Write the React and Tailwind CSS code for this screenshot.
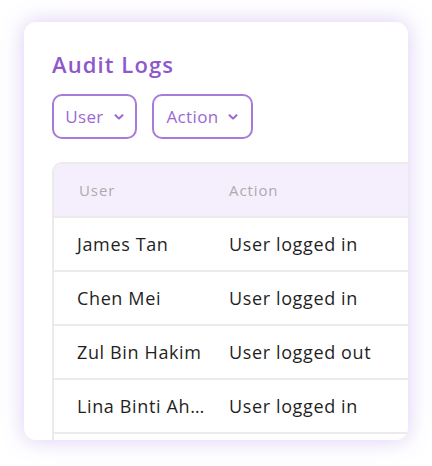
import React from 'react';

const rows = [
  { user: 'James Tan', action: 'User logged in' },
  { user: 'Chen Mei', action: 'User logged in' },
  { user: 'Zul Bin Hakim', action: 'User logged out' },
  { user: 'Lina Binti Ahmad', action: 'User logged in' },
];

const Chevron = () => (
  <svg viewBox="0 0 10 6" className="w-[10px] h-[6px]" fill="none" stroke="currentColor" strokeWidth="2" strokeLinecap="round" strokeLinejoin="round">
    <path d="M1.5 1.2L5 4.6l3.5-3.4" />
  </svg>
);

const FilterButton = ({ label, width }) => (
  <button className={`${width} h-[45px] flex items-center justify-center gap-[10px] border-2 border-[#a77cd8] rounded-[10px] text-[#9a68d4] text-[17px] tracking-[0.02em]`}>
    {label}
    <Chevron />
  </button>
);

export default function App() {
  return (
    <div className="w-[432px] h-[466px] bg-white pt-[22px] pl-[24px]" style={{ fontFamily: '"Open Sans", sans-serif' }}>
      <div className="w-[384px] h-[418px] bg-white rounded-[12px] overflow-hidden shadow-[0_0_22px_rgba(150,110,225,0.35)] pl-[28px] pt-[28px]">
        <h1 className="text-[22px] leading-[28px] font-semibold text-[#8f58cc] tracking-[0.05em]">Audit Logs</h1>
        <div className="flex gap-[15px] mt-[16px]">
          <FilterButton label="User" width="w-[85px]" />
          <FilterButton label="Action" width="w-[101px]" />
        </div>
        <div className="mt-[23px] w-[420px] border-2 border-[#ebebeb] rounded-tl-[10px] overflow-hidden">
          <div className="flex h-[52px] items-center bg-[#f5effd] text-[#ababab] text-[15px] tracking-[0.06em]">
            <div className="w-[175px] pl-[25px]">User</div>
            <div>Action</div>
          </div>
          {rows.map((r) => (
            <div key={r.user} className="flex h-[54px] items-center border-t-2 border-[#ebebeb] text-[#1f1f1f] text-[18px] tracking-[0.035em]">
              <div className="w-[175px] pl-[23px] pr-[22px] truncate">{r.user}</div>
              <div className="whitespace-nowrap">{r.action}</div>
            </div>
          ))}
          <div className="h-[54px] border-t-2 border-[#ebebeb]" />
        </div>
      </div>
    </div>
  );
}
